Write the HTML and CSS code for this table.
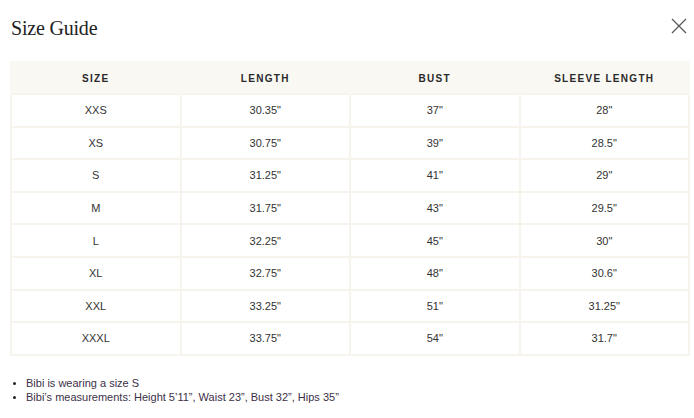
FILE: index.html
```html
<!DOCTYPE html>
<html>
<head>
<meta charset="utf-8">
<link rel="stylesheet" href="styles.css">
</head>
<body>
<div class="modal">
  <header class="modal-head">
    <h1 class="title">Size Guide</h1>
    <button class="close" aria-label="Close">
      <svg width="16" height="16" viewBox="0 0 16 16"><path d="M1 1 L15 15 M15 1 L1 15" stroke="#555" stroke-width="1.2" fill="none"/></svg>
    </button>
  </header>
  <table class="sizes">
    <thead>
      <tr><th>SIZE</th><th>LENGTH</th><th>BUST</th><th>SLEEVE LENGTH</th></tr>
    </thead>
    <tbody>
      <tr><td>XXS</td><td>30.35"</td><td>37"</td><td>28"</td></tr>
      <tr><td>XS</td><td>30.75"</td><td>39"</td><td>28.5"</td></tr>
      <tr><td>S</td><td>31.25"</td><td>41"</td><td>29"</td></tr>
      <tr><td>M</td><td>31.75"</td><td>43"</td><td>29.5"</td></tr>
      <tr><td>L</td><td>32.25"</td><td>45"</td><td>30"</td></tr>
      <tr><td>XL</td><td>32.75"</td><td>48"</td><td>30.6"</td></tr>
      <tr><td>XXL</td><td>33.25"</td><td>51"</td><td>31.25"</td></tr>
      <tr><td>XXXL</td><td>33.75"</td><td>54"</td><td>31.7"</td></tr>
    </tbody>
  </table>
  <ul class="notes">
    <li>Bibi is wearing a size S</li>
    <li>Bibi’s measurements: Height 5’11”, Waist 23”, Bust 32”, Hips 35”</li>
  </ul>
</div>
</body>
</html>
```
FILE: styles.css
```css
html, body { margin: 0; padding: 0; background: #fff; }
body { font-family: "Liberation Sans", Arial, sans-serif; color: #333; }
.modal { padding: 0 4px 0 10px; }
.modal-head { display: flex; justify-content: space-between; align-items: flex-start; height: 61px; }
.title { margin: 0; padding-top: 17px; padding-left: 1px; font-family: "Liberation Serif", "Times New Roman", serif; font-weight: normal; font-size: 20px; line-height: 23px; color: #222; letter-spacing: -0.2px; }
.close { border: 0; background: none; padding: 0; margin-top: 18px; margin-right: 3px; width: 16px; height: 16px; cursor: pointer; }
.close svg { display: block; }
.sizes { width: 680px; border-collapse: collapse; table-layout: fixed; }
.sizes th { background: #f9f8f3; height: 30px; padding: 0; font-size: 10px; font-weight: bold; letter-spacing: 1.3px; color: #2a2a2a; text-align: center; border: 2px solid #f9f8f3; border-bottom: 0; }
.sizes td { height: 30.6px; padding: 0; font-size: 11px; color: #333; text-align: center; border: 2px solid #f6f4ec; }
.notes { margin: 20px 0 0; padding: 0 0 0 16px; font-size: 11px; color: #3b3047; line-height: 14px; }
.notes li { padding-left: 0; }
.notes li::marker { color: #222; font-size: 10px; }
```
